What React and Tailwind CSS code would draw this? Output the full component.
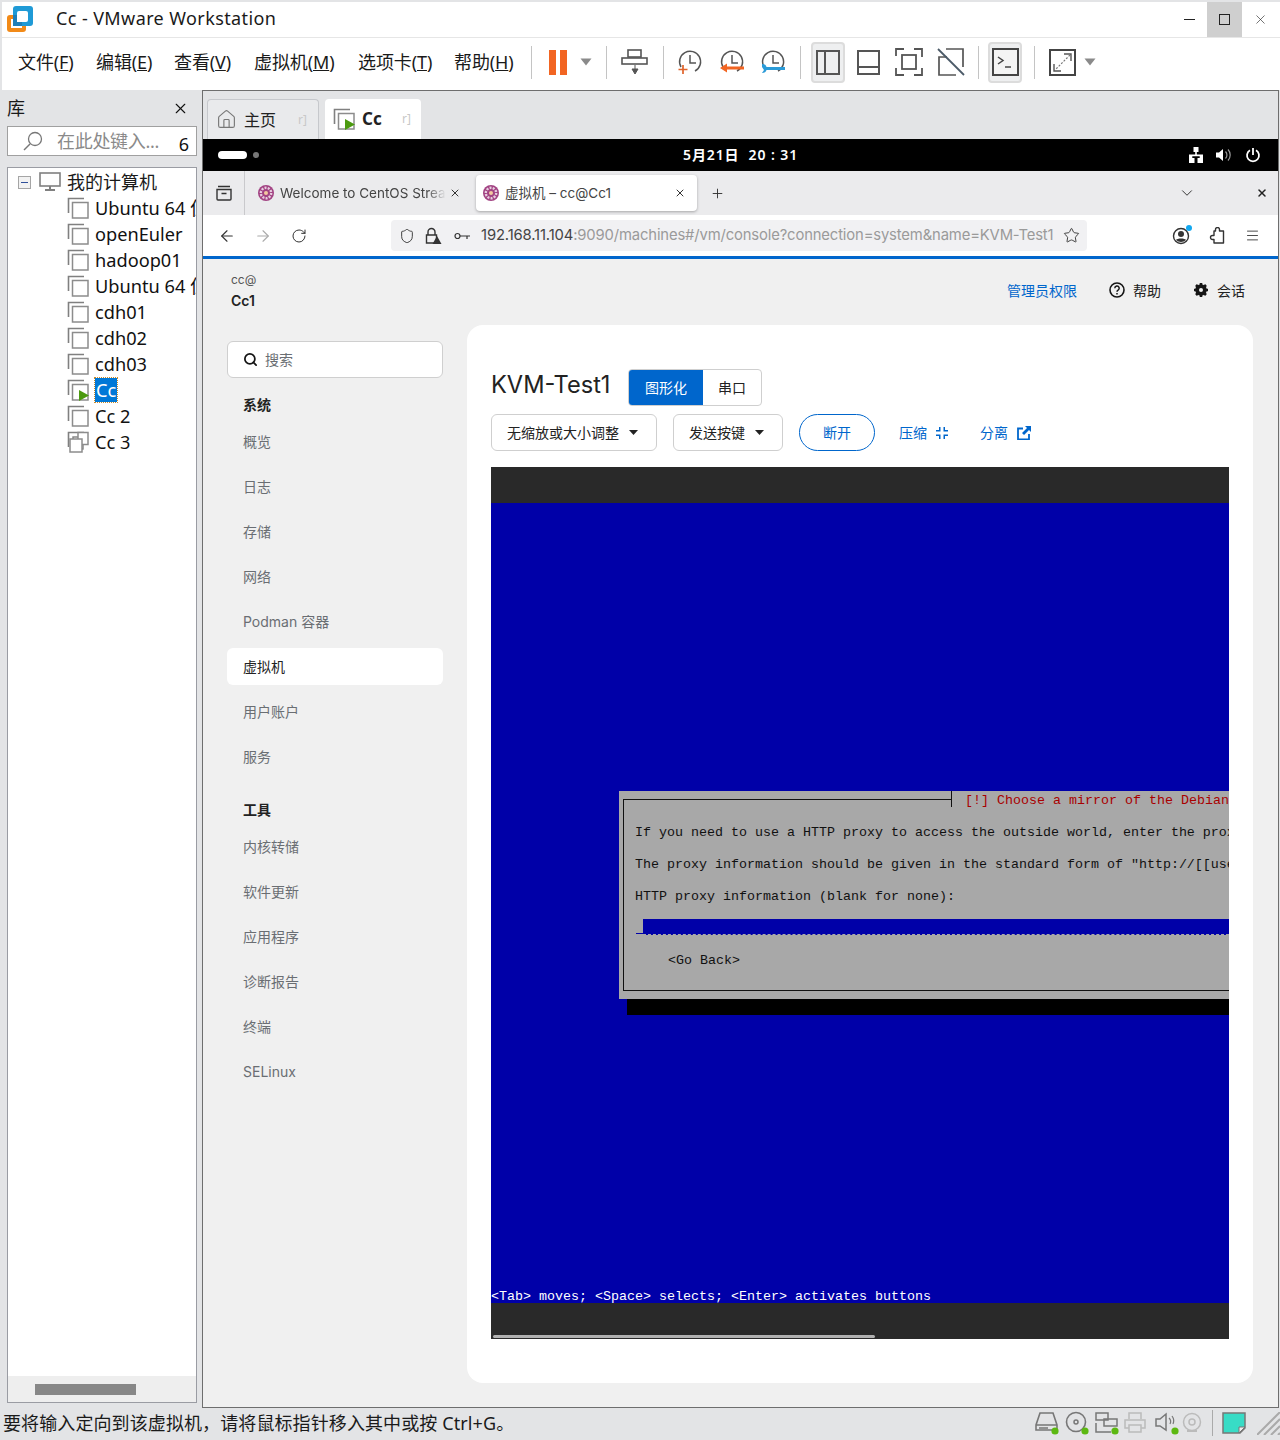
import { ArrowLeft, ArrowRight, ChevronDown, Home, Menu, Plus, RotateCw, Search, Shield, Star, X } from 'lucide-react';

const WIN_FONT = { fontFamily: '"Noto Sans", "Noto Sans CJK SC", sans-serif' };
const WEB_FONT = { fontFamily: 'Inter, "Noto Sans CJK SC", sans-serif' };
const TTY_FONT = { fontFamily: '"Liberation Mono", "DejaVu Sans Mono", monospace' };

const MENUS = [
  ['文件(', 'F', ')', 'w-[78px]'],
  ['编辑(', 'E', ')', 'w-[78px]'],
  ['查看(', 'V', ')', 'w-[80px]'],
  ['虚拟机(', 'M', ')', 'w-[104px]'],
  ['选项卡(', 'T', ')', 'w-[96px]'],
  ['帮助(', 'H', ')', 'w-[62px]'],
];

const VMS = ['Ubuntu 64 位', 'openEuler', 'hadoop01', 'Ubuntu 64 位', 'cdh01', 'cdh02', 'cdh03', 'Cc', 'Cc 2', 'Cc 3'];

const NAV_SYSTEM = ['概览', '日志', '存储', '网络', 'Podman 容器', '虚拟机', '用户账户', '服务'];
const NAV_TOOLS = ['内核转储', '软件更新', '应用程序', '诊断报告', '终端', 'SELinux'];

const Sep = ({ className }) => <div className={`w-px h-[33px] bg-[#c4c4c4] shrink-0 ${className}`} />;

const Caret = ({ className }) => (
  <svg width="12" height="8" viewBox="0 0 12 8" className={`shrink-0 ${className}`}>
    <path d="M0.5 0.5h11L6 7.5z" fill="#8a8a8a" />
  </svg>
);

const VmLogo = () => (
  <svg width="26" height="26" viewBox="0 0 26 26" className="shrink-0">
    <path d="M3 9h13a3 3 0 0 1 3 3v11a3 3 0 0 1-3 3H3a3 3 0 0 1-3-3V12a3 3 0 0 1 3-3z" fill="#f28a18" />
    <rect x="4" y="13" width="11" height="9" fill="#fff" />
    <rect x="6" y="0" width="20" height="20" rx="3" fill="#1f9ad6" />
    <rect x="10" y="5" width="11" height="11" rx="2" fill="#fff" />
    <rect x="6" y="9" width="9" height="11" fill="#1f7fb8" />
    <rect x="10" y="9" width="7" height="7" fill="#fff" />
  </svg>
);

const VmIcon = ({ running, stack }) => (
  <svg width="23" height="23" viewBox="0 0 23 23" className="shrink-0">
    <path d="M1.500 16V1.500H17" fill="none" stroke="#808080" strokeWidth="1.600" />
    {stack && <rect x="6" y="6" width="10" height="12" fill="#fff" stroke="#808080" strokeWidth="1.400" />}
    <rect x={stack ? 11 : 5.5} y={stack ? 1.5 : 5.5} width={stack ? 10 : 15.5} height={stack ? 12 : 15.5} fill="#fff" stroke="#8c8c8c" strokeWidth="1.500" />
    {stack && <rect x="3" y="8" width="12" height="13" fill="#fff" stroke="#8c8c8c" strokeWidth="1.500" />}
    {running && <path d="M12 11l10 5.500-10 5.500z" fill="#4c9a10" />}
  </svg>
);

const Clock = ({ children }) => (
  <svg width="30" height="30" viewBox="0 0 30 30" className="shrink-0">
    <path d="M5 20a10.500 10.500 0 1 1 14 4" fill="none" stroke="#555" strokeWidth="1.500" />
    <path d="M14 8v8h6" fill="none" stroke="#555" strokeWidth="1.500" />
    {children}
  </svg>
);

const Favicon = () => (
  <svg width="16" height="16" viewBox="0 0 16 16" className="shrink-0">
    <circle cx="8" cy="8" r="8" fill="#a24383" />
    <circle cx="8" cy="8" r="5.200" fill="none" stroke="#e8cfe0" strokeWidth="2.400" strokeDasharray="2 1.200" />
    <circle cx="8" cy="8" r="2" fill="#f4c9a0" />
  </svg>
);

const Dot = () => <circle cx="20" cy="20" r="3.600" fill="#5cb811" />;

function TitleBar() {
  return (
    <div className="h-[35px] mt-[2px] ml-[2px] bg-white flex items-center shrink-0 relative">
      <div className="ml-[5px] mt-[-2px]"><VmLogo /></div>
      <div className="ml-[23px] text-[18px] tracking-[0.4px] text-[#1a1a1a] mt-[-3px]">Cc - VMware Workstation</div>
      <div className="ml-auto flex h-full">
        <div className="w-[35px] flex items-center justify-center"><div className="w-[11px] h-px bg-[#222]" /></div>
        <div className="w-[35px] bg-[#cfcfcf] flex items-center justify-center"><div className="w-[11px] h-[11px] border border-[#222]" /></div>
        <div className="w-[36px] flex items-center justify-center mr-[2px]"><X size={15} strokeWidth={1} color="#222" /></div>
      </div>
    </div>
  );
}

function Toolbar() {
  return (
    <div className="h-[53px] ml-[2px] pb-[4px] bg-white border-t border-[#e6e6e6] flex items-center shrink-0 text-[18px] text-[#1a1a1a] pl-[16px]">
      <div className="flex w-[513px]">
        {MENUS.map((m, i) => (
          <span key={i} className={`whitespace-nowrap tracking-[-0.1px] ${m[3]}`}>
            {m[0]}<span className="underline">{m[1]}</span>{m[2]}
          </span>
        ))}
      </div>
      <Sep />
      <div className="ml-[17px] flex gap-[4px]">
        <div className="w-[7px] h-[25px] bg-[#f26522]" />
        <div className="w-[7px] h-[25px] bg-[#f26522]" />
      </div>
      <Caret className="ml-[13px]" />
      <Sep className="ml-[14px]" />
      <svg width="30" height="30" viewBox="0 0 30 30" className="ml-[13px] shrink-0">
        <rect x="8" y="3" width="13" height="7" fill="none" stroke="#555" strokeWidth="1.600" />
        <rect x="2" y="11" width="25" height="6" fill="none" stroke="#555" strokeWidth="1.600" />
        <path d="M15 18v6M12 22h6l-3 5z" fill="#555" stroke="#555" />
      </svg>
      <Sep className="ml-[13px]" />
      <div className="ml-[12px]">
        <Clock><path d="M7 18v9M2.500 22.500h9" stroke="#e0632a" strokeWidth="1.700" /></Clock>
      </div>
      <div className="ml-[12px]">
        <Clock><path d="M2 21l7-4.500v3h17v3H9v3z" fill="#f26522" /></Clock>
      </div>
      <div className="ml-[11px]">
        <Clock><path d="M3 17c3 0 4 1 4.500 3H26v3H7.500c-.5 2-2 3-4.500 3l2-3-2-3z" fill="#2b9bd8" /></Clock>
      </div>
      <Sep className="ml-[11px]" />
      <div className="ml-[10px] w-[34px] h-[41px] bg-[#eeeff0] border-2 border-[#dcdcdc] rounded flex items-center justify-center">
        <div className="w-[24px] h-[25px] border-2 border-[#555] flex"><div className="w-[8px] border-r-2 border-[#555]" /></div>
      </div>
      <div className="ml-[12px] w-[23px] h-[25px] border-2 border-[#555] flex items-end"><div className="w-full h-[7px] border-t-2 border-[#555]" /></div>
      <svg width="28" height="28" viewBox="0 0 28 28" className="ml-[15px] shrink-0">
        <path d="M1 8V1h8M19 1h8v8M27 20v7h-8M9 27H1v-7" fill="none" stroke="#555" strokeWidth="1.800" />
        <rect x="7" y="7" width="14" height="14" fill="none" stroke="#555" strokeWidth="1.800" />
      </svg>
      <svg width="28" height="28" viewBox="0 0 28 28" className="ml-[14px] shrink-0">
        <path d="M9 1h17v18M19 27H2V9h8" fill="none" stroke="#555" strokeWidth="1.700" />
        <path d="M1 1l26 26" stroke="#4b5a68" strokeWidth="1.800" />
      </svg>
      <Sep className="ml-[13px]" />
      <div className="ml-[9px] w-[34px] h-[41px] bg-[#eeeff0] border-2 border-[#dcdcdc] rounded flex items-center justify-center">
        <svg width="27" height="28" viewBox="0 0 27 28">
          <rect x="1" y="1" width="25" height="26" fill="#f4f4f4" stroke="#444" strokeWidth="2" />
          <path d="M6 9l5 3.500-5 3.500M13 19h6" fill="none" stroke="#444" strokeWidth="1.500" />
        </svg>
      </div>
      <Sep className="ml-[12px]" />
      <svg width="27" height="27" viewBox="0 0 27 27" className="ml-[14px] shrink-0">
        <rect x="1" y="1" width="25" height="25" fill="none" stroke="#444" strokeWidth="2" />
        <path d="M15 5h7v7M5 15v7h7" fill="none" stroke="#555" strokeWidth="1.400" />
        <path d="M21 6L6 21" stroke="#777" strokeWidth="1.200" strokeDasharray="2 1.500" />
      </svg>
      <Caret className="ml-[8px]" />
    </div>
  );
}

function Library() {
  return (
    <div className="w-[190px] ml-[7px] flex flex-col shrink-0">
      <div className="h-[36px] flex items-center justify-between text-[18px] text-[#1a1a1a]">
        <span>库</span>
        <X size={17} strokeWidth={1.600} color="#111" className="mr-[8px]" />
      </div>
      <div className="h-[30px] bg-white border border-[#a0a0a0] flex items-center relative">
        <svg width="22" height="22" viewBox="0 0 22 22" className="ml-[14px] shrink-0">
          <circle cx="13" cy="9" r="6.500" fill="none" stroke="#777" strokeWidth="1.300" />
          <path d="M8 14l-6 6" stroke="#777" strokeWidth="1.500" />
        </svg>
        <span className="ml-[13px] text-[18px] text-[#8a8a8a] tracking-[-0.3px] whitespace-nowrap">在此处键入...</span>
        <span className="absolute right-[7px] top-[4px] text-[18px] text-[#111]">6</span>
      </div>
      <div className="mt-[11px] h-[1236px] bg-white border border-[#9a9ca3] flex flex-col overflow-hidden relative">
        <div className="flex items-center h-[26px] mt-[1px] pl-[10px] text-[18px] text-[#1a1a1a]">
          <div className="w-[13px] h-[13px] border border-[#a5a5a5] bg-[#f2f2f2] flex items-center justify-center shrink-0">
            <div className="w-[7px] h-px bg-[#30509a]" />
          </div>
          <svg width="23" height="20" viewBox="0 0 23 20" className="ml-[8px] shrink-0">
            <rect x="1" y="1" width="20" height="13" fill="none" stroke="#808080" strokeWidth="1.600" />
            <path d="M11 14v3M6 18h10" stroke="#808080" strokeWidth="2" />
          </svg>
          <span className="ml-[5px] whitespace-nowrap">我的计算机</span>
        </div>
        {VMS.map((name, i) => (
          <div key={i} className="flex items-center h-[26px] pl-[59px] text-[18.200px] text-[#111] whitespace-nowrap">
            <VmIcon running={name === 'Cc'} stack={name === 'Cc 3'} />
            <span className={`ml-[5px] leading-[24px] ${name === 'Cc' ? 'bg-[#0078d7] text-white outline-1 outline-dotted outline-[#c98a2a] px-[1px] ml-[4px]' : ''}`}>{name}</span>
          </div>
        ))}
        <div className="mt-auto h-[26px] bg-[#eeeeee] flex items-center pl-[27px] shrink-0">
          <div className="w-[101px] h-[11px] bg-[#878787]" />
        </div>
      </div>
    </div>
  );
}

function VmTabs() {
  return (
    <div className="h-[48px] flex items-end pl-[4px] gap-[6px] bg-[#e3e4e6] shrink-0">
      <div className="w-[112px] h-[40px] bg-[#e9eaec] border border-b-0 border-[#c6c8cc] rounded-t flex items-center pl-[8px] text-[16px] text-[#222]">
        <Home size={21} strokeWidth={1.300} color="#777" />
        <span className="ml-[7px]">主页</span>
        <span className="ml-auto mr-[11px] text-[12px] text-[#c8c8c8]">r]</span>
      </div>
      <div className="w-[96px] h-[40px] bg-white rounded-t flex items-center pl-[8px] text-[17px] font-bold text-[#222]">
        <VmIcon running />
        <span className="ml-[6px]">Cc</span>
        <span className="ml-auto mr-[10px] text-[12px] font-normal text-[#c8c8c8]">r]</span>
      </div>
    </div>
  );
}

function GnomeBar() {
  return (
    <div className="h-[32px] bg-black flex items-center relative shrink-0 text-white">
      <div className="ml-[15px] w-[29px] h-[8px] bg-white rounded-full" />
      <div className="ml-[6px] w-[6px] h-[6px] bg-[#777] rounded-full" />
      <div className="absolute left-[480px] top-[5px] text-[14px] font-semibold tracking-[0.9px] whitespace-pre">5月21日  20 : 31</div>
      <div className="ml-auto flex items-center mr-[17px] mt-[-1px]">
        <svg width="16" height="16" viewBox="0 0 16 16"><path d="M5.500 0h5v5h-1.700v2.500H15V16h-5.500v-5h2.200V9.200H4.300V11h2.200v5H1V7.500h6.200V5H5.500z" fill="#fff" /></svg>
        <svg width="16" height="14" viewBox="0 0 16 14" className="ml-[12px]">
          <path d="M0 4.500h3L7 1v12L3 9.500H0z" fill="#fff" />
          <path d="M9.500 3.500a5 5 0 0 1 0 7M12 1.500a8 8 0 0 1 0 11" fill="none" stroke="#fff" strokeWidth="1.200" opacity=".6" />
        </svg>
        <svg width="16" height="16" viewBox="0 0 16 16" className="ml-[13px]">
          <path d="M5 3.200a6 6 0 1 0 6 0M8 1v7" fill="none" stroke="#fff" strokeWidth="1.800" />
        </svg>
      </div>
    </div>
  );
}

function Browser() {
  return (
    <div style={WEB_FONT}>
      <div className="h-[44px] bg-[#ebebed] flex items-center text-[#333] shrink-0 relative">
        <div className="w-[42px] h-full flex items-center justify-center border-r border-[#c9c9cc]">
          <svg width="16" height="16" viewBox="0 0 16 16">
            <path d="M2 1.500h12M1 4.500h14V14a1 1 0 0 1-1 1H2a1 1 0 0 1-1-1zM5.500 8.500h5" fill="none" stroke="#333" strokeWidth="1.400" />
          </svg>
        </div>
        <div className="w-[231px] h-full flex items-center pl-[13px] shrink-0">
          <Favicon />
          <span className="ml-[6px] w-[166px] overflow-hidden whitespace-nowrap text-[13.500px] text-[#444] [mask-image:linear-gradient(to_right,black_88%,transparent)]">Welcome to CentOS Strea</span>
          <X size={12} strokeWidth={2} color="#333" className="ml-[3px] shrink-0" />
        </div>
        <div className="w-[221px] h-[36px] bg-white rounded shadow-[0_1px_3px_rgba(0,0,0,0.3)] flex items-center pl-[7px] shrink-0">
          <Favicon />
          <span className="ml-[6px] text-[13.500px] text-[#444] whitespace-nowrap">虚拟机 – cc@Cc1</span>
          <X size={12} strokeWidth={2} color="#333" className="ml-auto mr-[11px]" />
        </div>
        <Plus size={15} strokeWidth={1.500} color="#333" className="ml-[13px]" />
        <ChevronDown size={18} strokeWidth={1.300} color="#333" className="ml-auto mr-[60px]" />
        <X size={12} strokeWidth={3} color="#222" className="mr-[10px]" />
      </div>
      <div className="h-[41px] bg-white flex items-center shrink-0">
        <ArrowLeft size={18} strokeWidth={1.500} color="#333" className="ml-[15px]" />
        <ArrowRight size={18} strokeWidth={1.500} color="#aaa" className="ml-[18px]" />
        <RotateCw size={16} strokeWidth={1.500} color="#333" className="ml-[19px]" />
        <div className="ml-[84px] w-[696px] h-[31px] bg-[#f1f1f3] rounded flex items-center shrink-0">
          <Shield size={16} strokeWidth={1.400} color="#333" className="ml-[8px]" />
          <svg width="18" height="18" viewBox="0 0 18 18" className="ml-[9px]">
            <path d="M4 8V5a3.500 3.500 0 0 1 7 0v3M2.500 8h10v8h-10z" fill="none" stroke="#333" strokeWidth="1.400" />
            <path d="M13 9l4.500 8h-9z" fill="#333" />
          </svg>
          <svg width="16" height="10" viewBox="0 0 16 10" className="ml-[12px]">
            <circle cx="3.500" cy="5" r="2.500" fill="none" stroke="#333" strokeWidth="1.200" />
            <path d="M6 5h10M13 5v3" stroke="#333" strokeWidth="1.200" />
          </svg>
          <span className="ml-[11px] text-[14.800px] tracking-[-0.14px] text-[#444] whitespace-nowrap">
            192.168.11.104<span className="text-[#9a9a9a]">:9090/machines#/vm/console?connection=system&amp;name=KVM-Test1</span>
          </span>
          <Star size={17} strokeWidth={1.300} color="#333" className="ml-auto mr-[7px] shrink-0" />
        </div>
        <div className="ml-[85px] relative">
          <svg width="18" height="18" viewBox="0 0 18 18">
            <circle cx="9" cy="9" r="7.500" fill="none" stroke="#333" strokeWidth="1.400" />
            <circle cx="9" cy="7" r="3" fill="#333" />
            <path d="M4 13c1-2 9-2 10 0a7 7 0 0 1-10 0z" fill="#333" />
          </svg>
          <div className="absolute right-[-2px] top-[-2px] w-[6px] h-[6px] rounded-full bg-[#12a8f0]" />
        </div>
        <svg width="16" height="17" viewBox="0 0 16 17" className="ml-[19px] shrink-0">
          <path d="M6.500 2.500a2 2 0 0 1 4 0V4h4v12H5v-3.500H3.500a2 2 0 0 1 0-4H5V4h1.500z" fill="none" stroke="#333" strokeWidth="1.400" strokeLinejoin="round" />
        </svg>
        <Menu size={15} strokeWidth={1.400} color="#333" className="ml-[20px]" />
      </div>
      <div className="h-[3px] bg-[#0066cc] shrink-0" />
    </div>
  );
}

function NavItem({ label, active }) {
  return (
    <div className={`h-[37px] mt-[8px] first:mt-0 pl-[16px] flex items-center text-[14px] rounded-md ${active ? 'bg-white text-[#222]' : 'text-[#6a6e73]'}`}>
      {label}
    </div>
  );
}

function CockpitNav() {
  return (
    <div className="w-[216px] ml-[24px] shrink-0">
      <div className="h-[37px] bg-white border border-[#cfcfcf] rounded-md flex items-center pl-[15px] text-[14px] text-[#6a6e73]">
        <Search size={15} strokeWidth={2.800} color="#151515" />
        <span className="ml-[7px]">搜索</span>
      </div>
      <div className="mt-[17px] pl-[16px] h-[20px] leading-[20px] text-[14px] font-bold text-[#222]">系统</div>
      <div className="mt-[8px]">
        {NAV_SYSTEM.map((n) => <NavItem key={n} label={n} active={n === '虚拟机'} />)}
      </div>
      <div className="mt-[25px] pl-[16px] h-[20px] leading-[20px] text-[14px] font-bold text-[#222]">工具</div>
      <div className="mt-[8px]">
        {NAV_TOOLS.map((n) => <NavItem key={n} label={n} />)}
      </div>
    </div>
  );
}

function Console() {
  return (
    <div className="mt-[16px] w-[738px] h-[872px] bg-[#292929] flex flex-col relative overflow-hidden" style={TTY_FONT}>
      <div className="h-[36px] shrink-0" />
      <div className="h-[800px] bg-[#0000a8] flex flex-col shrink-0 overflow-hidden">
        <div className="mt-[288px] ml-[128px] w-[610px] h-[208px] bg-[#a8a8a8] relative text-[13.330px] text-[#111] whitespace-pre shrink-0 overflow-hidden">
          <div className="absolute left-[4px] top-[8px] right-[-10px] bottom-[8px] border border-[#111]" />
          <div className="absolute left-[332px] top-0 h-[16px] w-[300px] bg-[#a8a8a8] border-l border-[#111]" />
          <div className="absolute left-[346px] top-[1px] h-[18px] leading-[18px] text-[#a80000]">[!] Choose a mirror of the Debian</div>
          <div className="absolute left-[16px] top-[33px] leading-[18px]">If you need to use a HTTP proxy to access the outside world, enter the proxy</div>
          <div className="absolute left-[16px] top-[65px] leading-[18px]">The proxy information should be given in the standard form of "http://[[user</div>
          <div className="absolute left-[16px] top-[97px] leading-[18px]">HTTP proxy information (blank for none):</div>
          <div className="absolute left-[17px] top-[142px] w-[7px] h-px bg-[#0000a8]" />
          <div className="absolute left-[24px] top-[128px] right-0 h-[16px] bg-[#0000a8] border-b border-dashed border-[#a8a8a8]" />
          <div className="absolute left-[49px] top-[161px] leading-[18px]">&lt;Go Back&gt;</div>
        </div>
        <div className="ml-[136px] h-[16px] bg-black shrink-0" />
        <div className="mt-auto h-[16px] leading-[20px] text-[13.330px] text-white whitespace-pre shrink-0">&lt;Tab&gt; moves; &lt;Space&gt; selects; &lt;Enter&gt; activates buttons</div>
      </div>
      <div className="mt-auto mb-[1px] ml-[2px] w-[382px] h-[3px] rounded-full bg-[#b0b0b0]" />
    </div>
  );
}

function VmCard() {
  return (
    <div className="ml-[24px] w-[786px] h-[1058px] bg-white rounded-2xl px-[24px] pt-[44px] text-[14px] text-[#222] shrink-0">
      <div className="flex items-center h-[37px]">
        <div className="text-[23.600px] w-[137px] mt-[-5px] text-[#222]">KVM-Test1</div>
        <div className="flex h-[37px] border border-[#cfcfcf] rounded-[4px] overflow-hidden">
          <div className="w-[74px] bg-[#0066cc] text-white flex items-center justify-center">图形化</div>
          <div className="w-[58px] flex items-center justify-center">串口</div>
        </div>
      </div>
      <div className="flex items-center h-[37px] mt-[8px]">
        <div className="w-[166px] h-full border border-[#cfcfcf] rounded-md flex items-center pl-[15px]">
          无缩放或大小调整
          <svg width="9" height="5" viewBox="0 0 9 5" className="ml-[10px]"><path d="M0 0h9L4.500 5z" fill="#222" /></svg>
        </div>
        <div className="ml-[16px] w-[110px] h-full border border-[#cfcfcf] rounded-md flex items-center pl-[15px]">
          发送按键
          <svg width="9" height="5" viewBox="0 0 9 5" className="ml-[10px]"><path d="M0 0h9L4.500 5z" fill="#222" /></svg>
        </div>
        <div className="ml-[16px] w-[76px] h-full border border-[#0066cc] rounded-full text-[#0066cc] flex items-center justify-center">断开</div>
        <div className="ml-[24px] flex items-center text-[#0066cc]">
          压缩
          <svg width="12" height="12" viewBox="0 0 12 12" className="ml-[9px]">
            <path d="M3 0h1.500v4.500H0V3h3zM7.500 0H9v3h3v1.500H7.500zM0 7.500h4.500V12H3V9H0zM7.500 7.500H12V9H9v3H7.500z" fill="#0066cc" />
          </svg>
        </div>
        <div className="ml-[32px] flex items-center text-[#0066cc]">
          分离
          <svg width="14" height="14" viewBox="0 0 14 14" className="ml-[9px]">
            <path d="M6 2.500H1v11h11V8" fill="none" stroke="#0066cc" strokeWidth="1.800" />
            <path d="M8 0h6v6l-2-2-5 5-2-2 5-5z" fill="#0066cc" />
          </svg>
        </div>
      </div>
      <Console />
    </div>
  );
}

function Cockpit() {
  return (
    <div className="flex-1 bg-[#f0f0f0] flex flex-col overflow-hidden" style={WEB_FONT}>
      <div className="h-[66px] flex items-start shrink-0 relative">
        <div className="ml-[28px] mt-[13px]">
          <div className="text-[12px] leading-[16px] text-[#555]">cc@</div>
          <div className="text-[14px] leading-[20px] mt-[3px] font-semibold text-[#222]">Cc1</div>
        </div>
        <div className="ml-auto mr-[33px] mt-[21px] flex items-center text-[14px] text-[#222] h-[20px]">
          <span className="text-[#0066cc]">管理员权限</span>
          <svg width="16" height="16" viewBox="0 0 16 16" className="ml-[32px]">
            <circle cx="8" cy="8" r="7" fill="none" stroke="#151515" strokeWidth="1.600" />
            <path d="M5.800 6.200a2.200 2.200 0 1 1 3.300 1.900c-.8.500-1.100.8-1.100 1.700M8 11v1.400" fill="none" stroke="#151515" strokeWidth="1.500" />
          </svg>
          <span className="ml-[8px]">帮助</span>
          <svg width="16" height="16" viewBox="0 0 16 16" className="ml-[32px]">
            <circle cx="8" cy="8" r="4.200" fill="none" stroke="#151515" strokeWidth="3.200" />
            <path d="M8 1v14M1 8h14M3 3l10 10M13 3L3 13" stroke="#151515" strokeWidth="2.600" />
            <circle cx="8" cy="8" r="2" fill="#f0f0f0" />
          </svg>
          <span className="ml-[8px]">会话</span>
        </div>
      </div>
      <div className="flex items-start">
        <div className="pt-[16px]"><CockpitNav /></div>
        <VmCard />
      </div>
    </div>
  );
}

function StatusBar() {
  return (
    <div className="h-[30px] flex items-center text-[18px] text-[#1a1a1a] shrink-0 relative">
      <span className="ml-[3px] whitespace-nowrap tracking-[0.1px]">要将输入定向到该虚拟机，请将鼠标指针移入其中或按 Ctrl+G。</span>
      <div className="ml-auto flex items-center">
        <svg width="24" height="24" viewBox="0 0 24 24" className="shrink-0">
          <path d="M5 2h13l4 12v5H1v-5z M1 14h21M4 17h9" fill="none" stroke="#777" strokeWidth="1.600" /><Dot />
        </svg>
        <svg width="24" height="24" viewBox="0 0 24 24" className="ml-[6px] shrink-0">
          <circle cx="11" cy="11" r="9.500" fill="none" stroke="#777" strokeWidth="1.600" /><circle cx="11" cy="11" r="2" fill="none" stroke="#777" strokeWidth="1.500" /><Dot />
        </svg>
        <svg width="24" height="24" viewBox="0 0 24 24" className="ml-[6px] shrink-0">
          <path d="M1 2h12v7H1zM9 8h13v7H9zM1 12v9h15" fill="none" stroke="#777" strokeWidth="1.500" /><Dot />
        </svg>
        <svg width="24" height="24" viewBox="0 0 24 24" className="ml-[4px] shrink-0">
          <path d="M6 8V2h12v6M6 17H2V9h20v8h-4M6 14h12v7H6z" fill="none" stroke="#bbb" strokeWidth="1.500" />
        </svg>
        <svg width="24" height="24" viewBox="0 0 24 24" className="ml-[8px] shrink-0">
          <path d="M1 8h4l6-5v16l-6-4H1z" fill="none" stroke="#777" strokeWidth="1.500" /><path d="M14 7a5 5 0 0 1 1 6M17 5a8 8 0 0 1 1 8" fill="none" stroke="#777" strokeWidth="1.200" /><Dot />
        </svg>
        <svg width="22" height="24" viewBox="0 0 22 24" className="ml-[2px] shrink-0">
          <circle cx="11" cy="11" r="8.500" fill="none" stroke="#bbb" strokeWidth="1.500" /><circle cx="11" cy="11" r="3" fill="none" stroke="#bbb" strokeWidth="1.500" /><path d="M6 20h10" stroke="#bbb" strokeWidth="2" />
        </svg>
        <div className="ml-[9px] w-px h-[26px] bg-[#aaa]" />
        <svg width="24" height="24" viewBox="0 0 24 24" className="ml-[9px] shrink-0">
          <path d="M1 2h22v15l-5 5H1z" fill="#38dcc6" stroke="#777" strokeWidth="1.500" /><path d="M23 16h-6v6z" fill="#eee" stroke="#777" />
        </svg>
        <svg width="23" height="23" viewBox="0 0 23 23" className="ml-[11px] shrink-0">
          <path d="M0 23L23 0M7 23L23 7M14 23l9-9M21 23l2-2" stroke="#aaa" strokeWidth="2" />
        </svg>
      </div>
    </div>
  );
}

export default function App() {
  return (
    <div className="w-[1280px] h-[1440px] bg-[#e3e4e6] flex flex-col overflow-hidden" style={WIN_FONT}>
      <TitleBar />
      <Toolbar />
      <div className="flex h-[1318px] shrink-0">
        <Library />
        <div className="ml-[5px] w-[1077px] h-[1318px] flex flex-col border border-[#6e6e6e] shrink-0">
          <VmTabs />
          <GnomeBar />
          <Browser />
          <Cockpit />
        </div>
      </div>
      <StatusBar />
    </div>
  );
}
